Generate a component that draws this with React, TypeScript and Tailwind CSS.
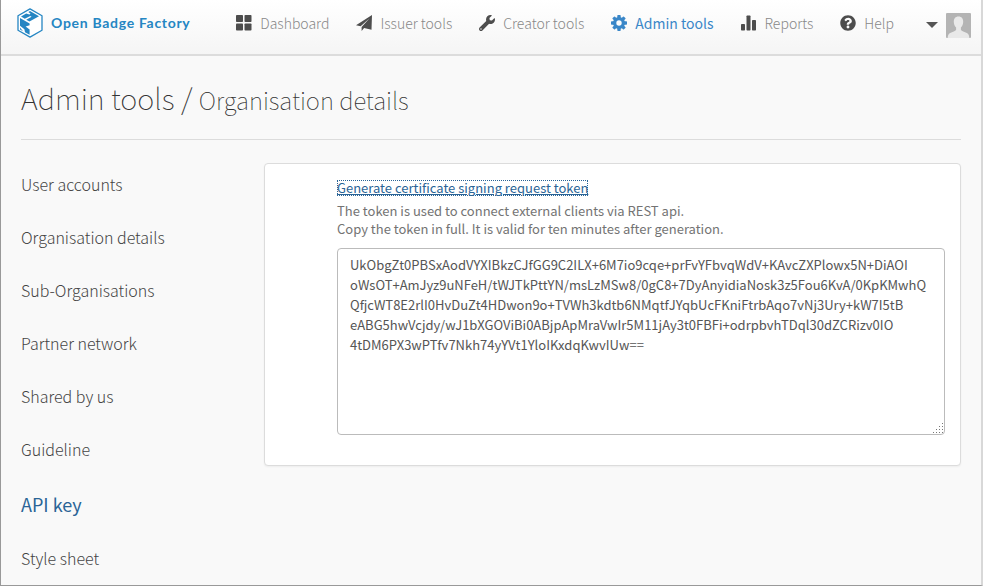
import type { ReactNode } from "react";
import { FaQuestionCircle, FaWrench } from "react-icons/fa";

const TOKEN = [
  "UkObgZt0PBSxAodVYXIBkzCJfGG9C2ILX+6M7io9cqe+prFvYFbvqWdV+KAvcZXPlowx5N+DiAOI",
  "oWsOT+AmJyz9uNFeH/tWJTkPttYN/msLzMSw8/0gC8+7DyAnyidiaNosk3z5Fou6KvA/0KpKMwhQ",
  "QfjcWT8E2rlI0HvDuZt4HDwon9o+TVWh3kdtb6NMqtfJYqbUcFKniFtrbAqo7vNj3Ury+kW7I5tB",
  "eABG5hwVcjdy/wJ1bXGOViBi0ABjpApMraVwIr5M11jAy3t0FBFi+odrpbvhTDql30dZCRizv0IO",
  "4tDM6PX3wPTfv7Nkh74yYVt1YloIKxdqKwvIUw==",
].join("\n");

function Logo() {
  return (
    <svg width="26" height="30" viewBox="0 0 26 30" aria-hidden="true" className="shrink-0">
      <path d="M13 .9 25 7.7V22.3L13 29.1 1 22.3V7.7Z" fill="#fff" stroke="#2586c3" strokeWidth="1.3" strokeLinejoin="round" />
      <path d="M13 3 22 8.2 12.5 13.6 9.2 11.8 14.6 8.8 13.2 8 7.8 10.8 4 8.5 9.2 5.4 12.4 6.6 13.6 5.8 11.4 4Z" fill="#2586c3" />
      <path d="M3 9.9 12.6 15.4V17.2L8.6 18.6 12.6 21.4V26.8L8 24.2 7.4 21.2 3 17.8Z" fill="#2586c3" />
      <path d="M3 19.6 6 23.2 3 21.5Z" fill="#2586c3" />
    </svg>
  );
}

function GridIcon() {
  return (
    <svg width="16" height="16" viewBox="0 0 16 16" fill="currentColor" aria-hidden="true">
      <rect x="0" y="0" width="7" height="7" rx=".8" />
      <rect x="8.5" y="0" width="7" height="7" rx=".8" />
      <rect x="0" y="8.5" width="7" height="7" rx=".8" />
      <rect x="8.5" y="8.5" width="7" height="7" rx=".8" />
    </svg>
  );
}

function SendIcon() {
  return (
    <svg width="16" height="16" viewBox="0 0 16 16" fill="currentColor" aria-hidden="true">
      <path d="M16 0 0 10.2 4.6 11.3 13.6 3.2 5.6 12V16L8.1 12.9 15.5 14.8Z" />
    </svg>
  );
}

function GearIcon() {
  return (
    <svg width="16" height="16" viewBox="0 0 16 16" aria-hidden="true">
      <g fill="currentColor">
        <rect x="6.3" y="0" width="3.4" height="16" rx=".7" />
        <rect x="6.3" y="0" width="3.4" height="16" rx=".7" transform="rotate(45 8 8)" />
        <rect x="6.3" y="0" width="3.4" height="16" rx=".7" transform="rotate(90 8 8)" />
        <rect x="6.3" y="0" width="3.4" height="16" rx=".7" transform="rotate(135 8 8)" />
        <circle cx="8" cy="8" r="6" />
      </g>
      <circle cx="8" cy="8" r="2.7" fill="#fcfcfc" />
    </svg>
  );
}

function BarsIcon() {
  return (
    <svg width="16" height="16" viewBox="0 0 16 16" fill="currentColor" aria-hidden="true">
      <rect x="0" y="9" width="4" height="6.5" rx=".7" />
      <rect x="5.5" y="0.5" width="4" height="15" rx=".7" />
      <rect x="11" y="5" width="4" height="10.5" rx=".7" />
    </svg>
  );
}

function Avatar() {
  return (
    <svg width="25" height="25" viewBox="0 0 25 25" aria-hidden="true">
      <rect width="25" height="25" rx="1" fill="#b4b4b4" />
      <path
        d="M12.5 3.5C9.4 3.5 7.7 5.7 7.8 9c.1 2.4 1 4.3 2.3 5.6v2.2c-.6 1.7-3.6 2-6 3.2-1.5.8-2.3 2.4-2.5 5h21.8c-.2-2.6-1-4.2-2.5-5-2.4-1.2-5.4-1.5-6-3.200v-2.200c1.3-1.3 2.2-3.2 2.3-5.6.1-3.3-1.6-5.5-4.7-5.5Z"
        fill="#e9e9e9"
      />
    </svg>
  );
}

function ResizeGrip() {
  const dots = [
    [9, 0], [9, 3], [6, 3], [9, 6], [6, 6], [3, 6], [9, 9], [6, 9], [3, 9], [0, 9],
  ];
  return (
    <svg width="10" height="10" viewBox="0 0 10 10" aria-hidden="true" className="pointer-events-none absolute right-0.5 bottom-0.5">
      {dots.map(([x, y]) => (
        <rect key={`${x}-${y}`} x={x} y={y} width="1" height="1" fill="#777" />
      ))}
    </svg>
  );
}

const NAV: { label: string; icon: ReactNode; active?: boolean }[] = [
  { label: "Dashboard", icon: <GridIcon /> },
  { label: "Issuer tools", icon: <SendIcon /> },
  { label: "Creator tools", icon: <FaWrench size={16} /> },
  { label: "Admin tools", icon: <GearIcon />, active: true },
  { label: "Reports", icon: <BarsIcon /> },
  { label: "Help", icon: <FaQuestionCircle size={16} /> },
];

const SECTIONS = [
  "User accounts",
  "Organisation details",
  "Sub-Organisations",
  "Partner network",
  "Shared by us",
  "Guideline",
  "API key",
  "Style sheet",
];

export default function App() {
  return (
    <div className="min-h-screen border-r-2 border-b border-l border-r-[#d8d8d8] border-b-[#999] border-l-[#999] bg-[#f9f9f9] font-['Noto_Sans_CJK_SC','Open_Sans',sans-serif] text-[#333]">
      <header className="flex h-14 items-start justify-between border-b-2 border-[#dcdcdc] bg-linear-to-b from-white to-[#f5f5f5] pr-2.5 pl-4">
        <a href="#home" className="flex h-[46px] items-center gap-2 text-[#2586c3]">
          <Logo />
          <span className="font-['Lato',sans-serif] text-sm font-bold tracking-wider whitespace-nowrap">Open Badge Factory</span>
        </a>
        <div className="flex items-start gap-8">
          <nav className="flex h-[46px] items-center gap-[27px]">
            {NAV.map(({ label, icon, active }) => (
              <a
                key={label}
                href="#nav"
                className={
                  active
                    ? "flex items-center gap-2 text-sm whitespace-nowrap text-[#3a87c8]"
                    : "flex items-center gap-2 text-sm font-light whitespace-nowrap text-[#888]"
                }
              >
                <span className={active ? "text-[#3a87c8]" : "text-[#4d4d4d]"}>{icon}</span>
                {label}
              </a>
            ))}
          </nav>
          <button type="button" aria-label="Account menu" className="flex h-[50px] items-center gap-2">
            <svg width="12" height="6" viewBox="0 0 12 6" aria-hidden="true">
              <path d="M0 0H12L6 6Z" fill="#555" />
            </svg>
            <Avatar />
          </button>
        </div>
      </header>

      <main className="px-5">
        <h1 className="border-b border-[#dcdcdc] py-2.5 text-[29px] leading-[63px] font-thin">
          Admin tools / <small className="text-2xl leading-none font-thin">Organisation details</small>
        </h1>

        <div className="flex items-start">
          <nav className="flex w-[243px] shrink-0 flex-col gap-7 pt-8">
            {SECTIONS.map((name) => (
              <a
                key={name}
                href="#section"
                className={
                  name === "API key"
                    ? "text-lg leading-7 text-[#2a6496]"
                    : "text-base leading-[25px] font-light text-[#444]"
                }
              >
                {name}
              </a>
            ))}
          </nav>

          <section className="mt-[23px] min-w-0 flex-1 rounded border border-[#dcdcdc] bg-white pt-4 pr-[15px] pb-[30px] pl-18 text-[13px] shadow-xs">
            <a href="#token" className="block w-fit leading-4 text-[#2a6496] underline outline-1 -outline-offset-1 outline-[#2a6496] outline-dotted">
              Generate certificate signing request token
            </a>
            <p id="token-help" className="mt-1.5 leading-[18px] text-[#737373]">
              The token is used to connect external clients via REST api.
              <br />
              Copy the token in full. It is valid for ten minutes after generation.
            </p>
            <div className="relative mt-2.5">
              <textarea
                aria-label="Certificate signing request token"
                aria-describedby="token-help"
                defaultValue={TOKEN}
                spellCheck={false}
                className="block h-[187px] w-full resize-none overflow-hidden rounded border border-[#bbb] bg-white px-3 py-1.5 leading-5 text-[#555]"
              />
              <ResizeGrip />
            </div>
          </section>
        </div>
      </main>
    </div>
  );
}
